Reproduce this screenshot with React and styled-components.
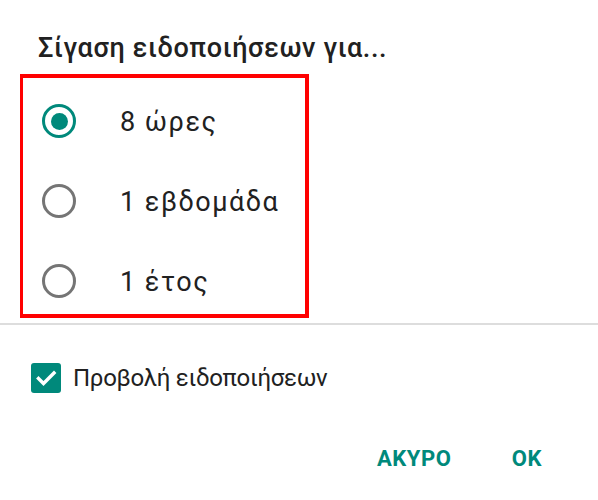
import React, { useState } from "react";
import styled, { createGlobalStyle } from "styled-components";

const GlobalStyle = createGlobalStyle`
  html, body {
    margin: 0;
    padding: 0;
    background: #ffffff;
  }
  body {
    font-family: Roboto, "Noto Sans", "Liberation Sans", sans-serif;
    color: #212121;
  }
`;

const options = ["8 ώρες", "1 εβδομάδα", "1 έτος"];

export default function App() {
  const [selected, setSelected] = useState(0);
  const [showNotifications, setShowNotifications] = useState(true);

  return (
    <>
      <GlobalStyle />
      <Dialog>
        <Title>Σίγαση ειδοποιήσεων για...</Title>

        <Highlight>
          {options.map((option, index) => (
            <OptionRow key={index} onClick={() => setSelected(index)}>
              <Radio checked={index === selected} />
              <OptionLabel>{option}</OptionLabel>
            </OptionRow>
          ))}
        </Highlight>

        <Divider />

        <CheckRow onClick={() => setShowNotifications(!showNotifications)}>
          <CheckBox checked={showNotifications}>
            {showNotifications && (
              <svg width="30" height="30" viewBox="0 0 30 30">
                <path
                  d="M7.5 15.5l5 5L23 10"
                  fill="none"
                  stroke="#ffffff"
                  strokeWidth="3.4"
                  strokeLinecap="square"
                />
              </svg>
            )}
          </CheckBox>
          <CheckLabel>Προβολή ειδοποιήσεων</CheckLabel>
        </CheckRow>

        <Actions>
          <ActionButton>ΑΚΥΡΟ</ActionButton>
          <ActionButton>OK</ActionButton>
        </Actions>
      </Dialog>
    </>
  );
}

const Dialog = styled.div`
  width: 598px;
  height: 500px;
  display: flex;
  flex-direction: column;
  overflow: hidden;
`;

const Title = styled.h1`
  margin: 33px 0 0 38px;
  font-size: 27px;
  line-height: 30px;
  font-weight: 500;
  letter-spacing: 0.6px;
  color: #212121;
`;

const Highlight = styled.div`
  box-sizing: border-box;
  width: 289px;
  margin: 11px 0 0 20px;
  border: 4px solid #ff0000;
  border-left-width: 3px;
  padding: 26px 0 16px 19px;
  display: flex;
  flex-direction: column;
  gap: 46px;
`;

const OptionRow = styled.div`
  display: flex;
  align-items: center;
  gap: 44px;
  height: 34px;
  cursor: pointer;
`;

const Radio = styled.span`
  box-sizing: border-box;
  width: 34px;
  height: 34px;
  flex: none;
  border-radius: 50%;
  border: 3.5px solid ${(p) => (p.checked ? "#00897b" : "#757575")};
  display: flex;
  align-items: center;
  justify-content: center;
  &::after {
    content: "";
    width: 17px;
    height: 17px;
    border-radius: 50%;
    background: #00897b;
    display: ${(p) => (p.checked ? "block" : "none")};
  }
`;

const OptionLabel = styled.span`
  font-size: 27px;
  line-height: 30px;
  letter-spacing: 1.5px;
  color: #212121;
  padding-top: 2px;
`;

const Divider = styled.div`
  height: 2px;
  margin-top: 5px;
  background: #dddddd;
`;

const CheckRow = styled.div`
  display: flex;
  align-items: center;
  gap: 12px;
  margin: 38px 0 0 31px;
  height: 30px;
  cursor: pointer;
`;

const CheckBox = styled.span`
  width: 30px;
  height: 30px;
  flex: none;
  border-radius: 3px;
  background: ${(p) => (p.checked ? "#00897b" : "transparent")};
  border: ${(p) => (p.checked ? "none" : "3px solid #757575")};
  display: flex;
`;

const CheckLabel = styled.span`
  font-size: 24px;
  line-height: 28px;
  letter-spacing: -0.3px;
  color: #212121;
`;

const Actions = styled.div`
  display: flex;
  justify-content: flex-end;
  gap: 60px;
  margin-top: 53px;
  padding-right: 56px;
`;

const ActionButton = styled.button`
  border: none;
  background: none;
  padding: 0;
  font-family: inherit;
  font-size: 22px;
  line-height: 26px;
  font-weight: 700;
  letter-spacing: 0.6px;
  color: #00897b;
  cursor: pointer;
`;
